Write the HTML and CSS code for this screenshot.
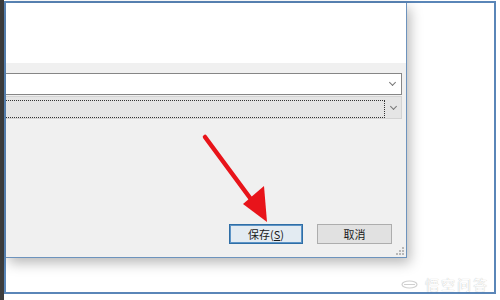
FILE: index.html
```html
<!DOCTYPE html>
<html lang="zh-CN">
    <head>
        <meta charset="UTF-8" />
        <title>保存对话框</title>
        <link rel="stylesheet" href="styles.css">
    </head>
    <body>
        <!-- 왼쪽 어두운 띠 -->
        <div class="strip"></div>

        <!-- 바깥 창 -->
        <div class="frame">
            <div class="dialog">
                <div class="dlg-top"></div>
                <div class="dlg-body">
                    <div class="combo combo1">
                        <span class="chev"></span>
                    </div>
                    <div class="combo combo2">
                        <div class="focus"></div>
                        <span class="chev"></span>
                    </div>

                    <div class="btns">
                        <button class="btn btn-save">保存(<u>S</u>)</button>
                        <button class="btn">取消</button>
                    </div>
                    <div class="grip">
                        <svg width="8" height="8" viewBox="0 0 8 8">
                            <rect x="6" y="0" width="2" height="2" fill="#b8b8b8"/>
                            <rect x="3" y="3" width="2" height="2" fill="#b8b8b8"/>
                            <rect x="6" y="3" width="2" height="2" fill="#b8b8b8"/>
                            <rect x="0" y="6" width="2" height="2" fill="#b8b8b8"/>
                            <rect x="3" y="6" width="2" height="2" fill="#b8b8b8"/>
                            <rect x="6" y="6" width="2" height="2" fill="#b8b8b8"/>
                        </svg>
                    </div>
                </div>
            </div>
        </div>

        <!-- 빨간 화살표 (위에 겹침) -->
        <svg class="arrow" width="80" height="100" viewBox="0 0 80 100">
            <line x1="5" y1="12" x2="56" y2="81" stroke="#e8141a" stroke-width="4.5" stroke-linecap="round"/>
            <polygon points="43,79 67,97 64,61" fill="#e8141a"/>
        </svg>

        <!-- 워터마크 -->
        <div class="mark">
            <svg width="17" height="9" viewBox="0 0 17 9">
                <ellipse cx="8.5" cy="4.5" rx="7.5" ry="3.5" fill="none" stroke="#d0d0d0" stroke-width="1.2"/>
                <line x1="3" y1="4.5" x2="14" y2="4.5" stroke="#d0d0d0" stroke-width="1"/>
            </svg>
            <span>悟空问答</span>
        </div>
    </body>
</html>
```

FILE: styles.css
```css
* {
    box-sizing: border-box;
}

body {
    margin: 0;
    width: 500px;
    height: 300px;
    display: flex;
    align-items: flex-start;
    background-color: #fff;
    font-family: "Noto Sans CJK SC", "Noto Sans", sans-serif;
    overflow: hidden;
}

/* 왼쪽 띠 */
.strip {
    width: 4px;
    height: 300px;
    background-color: #3d3d3d;
}

/* 바깥 창 테두리 */
.frame {
    width: 492px;
    height: 293px;
    margin-top: 1px;
    border: 2px solid #5a86b8;
    background-color: #fff;
}

/* 다이얼로그 */
.dialog {
    width: 401px;
    height: 255px;
    border-right: 1px solid #6d93bd;
    border-bottom: 1px solid #6d93bd;
    box-shadow: 3px 5px 12px rgba(0, 0, 0, 0.28);
    display: flex;
    flex-direction: column;
}

.dlg-top {
    height: 60px;
    background-color: #fff;
}

.dlg-body {
    flex: 1;
    background-color: #f0f0f0;
    padding-top: 10px;
    display: flex;
    flex-direction: column;
}

/* 콤보박스 */
.combo {
    width: 396px;
    display: flex;
    align-items: center;
    justify-content: flex-end;
}
.combo1 {
    height: 22px;
    background-color: #fff;
    border: 1px solid #868686;
    border-left: none;
    padding-right: 6px;
}
.combo2 {
    height: 23px;
    margin-top: 1px;
    background-color: #e5e5e5;
    border: 1px solid #d3d3d3;
    border-left: none;
    padding-right: 5px;
}
.focus {
    flex: 1;
    height: 18px;
    margin-top: 2px;
    margin-right: 6px;
    border: 1px dotted #333;
    border-left: none;
}

/* 아래 화살표 */
.chev {
    width: 5px;
    height: 5px;
    margin-bottom: 3px;
    border-right: 1px solid #777;
    border-bottom: 1px solid #777;
    transform: rotate(45deg);
}

/* 버튼 */
.btns {
    margin-top: 105px;
    padding-right: 14px;
    display: flex;
    justify-content: flex-end;
    gap: 14px;
}
.btn {
    width: 75px;
    height: 20px;
    padding: 0;
    font-family: "Noto Sans CJK SC", sans-serif;
    font-size: 11px;
    line-height: 18px;
    color: #1a1a1a;
    background-color: #e1e1e1;
    border: 1px solid #adadad;
}
.btn-save {
    width: 74px;
    background-color: #e3ebf2;
    border: 1px solid #2f6ea6;
    box-shadow: inset 0 0 0 1px #5d94c6;
}
.btn u {
    text-underline-offset: 1px;
}

/* 크기조절 손잡이 */
.grip {
    display: flex;
    justify-content: flex-end;
    padding: 3px 2px 0 0;
}
.grip svg {
    display: block;
}

/* 빨간 화살표 */
.arrow {
    position: absolute;
    top: 125px;
    left: 200px;
}

/* 워터마크 */
.mark {
    position: absolute;
    top: 274px;
    left: 401px;
    display: flex;
    align-items: center;
    gap: 7px;
    font-size: 14px;
    letter-spacing: 2px;
    color: #fdfdfd;
    text-shadow: 0 0 1px rgba(0, 0, 0, 0.3);
}
.mark svg {
    display: block;
}
```
